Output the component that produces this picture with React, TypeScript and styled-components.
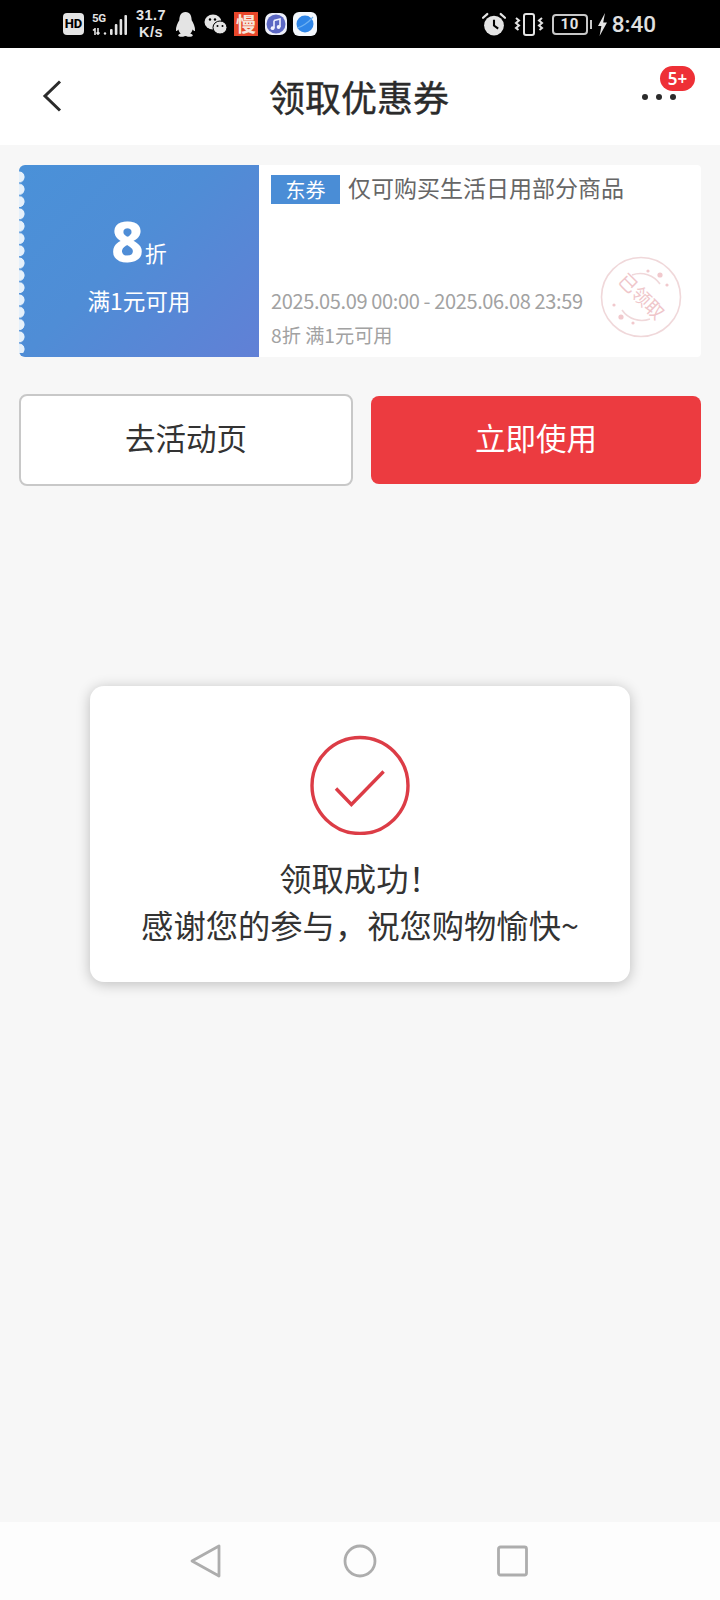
import React from 'react'
import styled, { createGlobalStyle } from 'styled-components'

const FONT = '"Noto Sans CJK SC", "Noto Sans", sans-serif'

const GlobalStyle = createGlobalStyle`
	html, body {
		margin: 0;
		padding: 0;
		background: #f7f7f7;
		font-family: ${FONT};
	}
	* {
		box-sizing: border-box;
	}
`

const Page = styled.div`
	position: relative;
	width: 720px;
	height: 1600px;
	display: flex;
	flex-direction: column;
	overflow: hidden;
	background: #f7f7f7;
`

/* status bar */
const StatusBar = styled.div`
	height: 48px;
	flex-shrink: 0;
	background: #000;
	color: #e4e4e4;
	display: flex;
	align-items: center;
	justify-content: space-between;
	padding: 0 64px 0 63px;
`

const StatusGroup = styled.div`
	display: flex;
	align-items: center;
`

const HdBadge = styled.span`
	width: 21px;
	height: 22px;
	border-radius: 4px;
	background: #e4e4e4;
	color: #000;
	font: 800 13px/22px 'Roboto', sans-serif;
	text-align: center;
`

const NetworkBlock = styled.div`
	display: flex;
	align-items: flex-end;
	margin-left: 8px;
	height: 22px;
`

const NetworkLabels = styled.div`
	display: flex;
	flex-direction: column;
	gap: 4px;
	width: 18px;
	font: 700 11.5px/11px 'Roboto', sans-serif;
	letter-spacing: -0.3px;
`

const Speed = styled.div`
	width: 34px;
	margin: 0 7px 0 7px;
	text-align: center;
	font: 700 14.5px/17px 'Liberation Sans', sans-serif;
	letter-spacing: 0.4px;
	white-space: nowrap;
`

const AppIcon = styled.span<{ $gap?: number }>`
	display: flex;
	margin-left: ${(p) => p.$gap ?? 7}px;
`

const SlowBadge = styled.span`
	width: 24px;
	height: 24px;
	margin-left: 7px;
	background: #e8472a;
	color: #f6e6dc;
	font: 700 20px/24px ${FONT};
	text-align: center;
`

const BatteryBody = styled.span`
	width: 36px;
	height: 21px;
	margin-left: 8px;
	border: 2px solid #c8c8c8;
	border-radius: 4px;
	font: 700 15px/17px 'Roboto', sans-serif;
	text-align: center;
	letter-spacing: 0.5px;
`

const BatteryTip = styled.span`
	width: 2px;
	height: 9px;
	margin-left: 2px;
	background: #c8c8c8;
`

const Clock = styled.span`
	margin-left: 5px;
	color: #e0e0e0;
	font: 500 22.5px/26px 'Roboto', sans-serif;
`

/* title bar */
const Header = styled.header`
	height: 97px;
	flex-shrink: 0;
	background: #fff;
	display: grid;
	grid-template-columns: 1fr auto 1fr;
	align-items: center;
	padding: 0 44px 0 42px;
`

const BackIcon = styled.svg`
	margin-top: -2px;
`

const Title = styled.h1`
	margin: -2px 0 0;
	font: 400 36px/48px ${FONT};
	-webkit-text-stroke: 0.4px #2b2b2b;
	color: #2b2b2b;
`

const MoreButton = styled.div`
	position: relative;
	justify-self: end;
	display: flex;
	gap: 8px;
`

const Dot = styled.span`
	width: 6px;
	height: 6px;
	border-radius: 50%;
	background: #2b2b2b;
`

const CountBadge = styled.span`
	position: absolute;
	left: 18px;
	top: -28px;
	width: 35px;
	height: 25px;
	border-radius: 13px;
	background: #ee3036;
	color: #fff;
	font: 600 17px/25px 'Noto Sans', sans-serif;
	text-align: center;
`

/* coupon */
const Content = styled.main`
	flex: 1;
	padding: 20px 19px 0;
`

const Ticket = styled.section`
	height: 192px;
	display: flex;
`

const TicketValue = styled.div`
	position: relative;
	width: 240px;
	flex-shrink: 0;
	border-radius: 6px 0 0 6px;
	background: linear-gradient(135deg, #4a91d8 0%, #4f8dd6 45%, #6180d6 100%);
	color: #fff;
	display: flex;
	flex-direction: column;
	align-items: center;
	padding-top: 41px;

	&::before {
		content: '';
		position: absolute;
		left: 0;
		top: 6px;
		bottom: 4px;
		width: 6px;
		background-image: radial-gradient(circle at 0 6px, #e6f1fb 5.2px, transparent 5.9px);
		background-size: 6px 12.3px;
	}
`

const Rate = styled.div`
	display: flex;
	align-items: baseline;
	height: 68px;
`

const RateNumber = styled.span`
	font: 800 56px/68px 'Noto Sans', sans-serif;
`

const RateUnit = styled.span`
	margin-left: 1px;
	font: 400 22px/28px ${FONT};
`

const RateRule = styled.div`
	margin-top: 11px;
	font: 400 22.6px/32px ${FONT};
`

const TicketBody = styled.div`
	position: relative;
	flex: 1;
	border-radius: 0 4px 4px 0;
	background: #fff;
	padding: 8px 12px 0;
	display: flex;
	flex-direction: column;
`

const TitleRow = styled.div`
	display: flex;
	align-items: flex-start;
`

const TicketTag = styled.span`
	width: 69px;
	height: 29px;
	margin-top: 2px;
	background: #4a8dd6;
	color: #fff;
	font: 400 20px/29px ${FONT};
	text-align: center;
`

const TicketName = styled.span`
	margin-left: 8px;
	margin-top: -2px;
	font: 400 23px/32px ${FONT};
	color: #666;
`

const TicketDate = styled.div<{ $size: number; $tight?: number }>`
	font: 400 ${(p) => p.$size}px/34px ${FONT};
	letter-spacing: ${(p) => p.$tight ?? 0}px;
	color: #a2a2a2;
	white-space: nowrap;
`

const DatePush = styled.div`
	margin-top: auto;
	padding-bottom: 5px;
`

const Stamp = styled.svg`
	position: absolute;
	right: 19px;
	top: 91px;
`

const Actions = styled.div`
	display: flex;
	align-items: center;
	gap: 18px;
	margin-top: 37px;
`

const GhostButton = styled.div`
	width: 334px;
	height: 92px;
	border: 2px solid #c8c8c8;
	border-radius: 8px;
	background: #fff;
	color: #333;
	font: 400 30.5px/83px ${FONT};
	text-align: center;
`

const PrimaryButton = styled.div`
	width: 330px;
	height: 88px;
	border-radius: 8px;
	background: #ec3b40;
	color: #fff;
	font: 400 30.5px/83px ${FONT};
	text-align: center;
`

/* success dialog, floats over the page */
const Dialog = styled.div`
	position: absolute;
	left: 90px;
	top: 686px;
	width: 540px;
	height: 296px;
	border-radius: 14px;
	background: #fff;
	box-shadow: 0 2px 14px rgba(0, 0, 0, 0.24);
	display: flex;
	flex-direction: column;
	align-items: center;
	padding-top: 49px;
`

const DialogText = styled.div`
	margin-top: 19px;
	font: 400 32.3px/47px ${FONT};
	color: #333;
	text-align: center;
	white-space: nowrap;
`

/* system navigation */
const NavBar = styled.nav`
	height: 78px;
	flex-shrink: 0;
	background: #fdfdfd;
	display: flex;
	align-items: center;
	justify-content: center;
	gap: 120px;
`

const TransferArrows = () => (
	<svg width="18" height="7" viewBox="0 0 18 7" fill="none" stroke="#e4e4e4" strokeWidth="1.6">
		<path d="M1 2.5L3 .8V7" />
		<path d="M6 0v6M4.5 4.5L6 6.2 7.5 4.5" />
		<circle cx="13" cy="5.5" r="1.2" fill="#e4e4e4" stroke="none" />
	</svg>
)

const SignalBars = () => (
	<svg width="17" height="20" viewBox="0 0 17 20" fill="#e4e4e4">
		<rect x="0" y="14" width="2.6" height="6" rx="1" />
		<rect x="4.8" y="9" width="2.6" height="11" rx="1" />
		<rect x="9.6" y="4" width="2.6" height="16" rx="1" />
		<rect x="14.4" y="0" width="2.6" height="20" rx="1" />
	</svg>
)

const Penguin = () => (
	<svg width="21" height="25" viewBox="0 0 21 25" fill="#e4e4e4">
		<path d="M10.5 0C5.8 0 4.4 4 4.3 8.2 2.6 11 .6 15 1 18.6c.2 1 1.4.4 2.4-1 .4 1.7 1.2 3 2.3 4-1.3.5-2.5 1.1-2.5 2 0 1.2 3.5 1.4 5 1.1.9-.3 1.5-.6 2.3-.6s1.4.3 2.3.6c1.5.3 5 .1 5-1.1 0-.9-1.2-1.5-2.5-2 1.1-1 1.9-2.3 2.3-4 1 1.4 2.2 2 2.4 1 .4-3.6-1.6-7.6-3.3-10.4C16.6 4 15.2 0 10.5 0z" />
	</svg>
)

const Wechat = () => (
	<svg width="23" height="21" viewBox="0 0 23 21">
		<ellipse cx="9" cy="8" rx="8.5" ry="7.5" fill="#e4e4e4" />
		<ellipse cx="16" cy="13.5" rx="7" ry="6.5" fill="#e4e4e4" stroke="#000" strokeWidth="1" />
		<circle cx="6" cy="5.5" r="1.2" fill="#000" />
		<circle cx="11" cy="5.5" r="1.2" fill="#000" />
		<circle cx="13.5" cy="12" r="1" fill="#000" />
		<circle cx="18.5" cy="12" r="1" fill="#000" />
	</svg>
)

const MusicApp = () => (
	<svg width="22" height="22" viewBox="0 0 22 22">
		<rect width="22" height="22" rx="7" fill="#eef0fa" />
		<circle cx="11" cy="11" r="9.5" fill="#5c68c4" />
		<path d="M9 7.5l6-1.5v8" fill="none" stroke="#f2f3ff" strokeWidth="1.6" />
		<path d="M9 7.5V15" fill="none" stroke="#f2f3ff" strokeWidth="1.6" />
		<circle cx="7.6" cy="15.2" r="1.9" fill="#f2f3ff" />
		<circle cx="13.6" cy="14" r="1.9" fill="#f2f3ff" />
	</svg>
)

const BrowserApp = () => (
	<svg width="24" height="24" viewBox="0 0 24 24">
		<rect width="24" height="24" rx="6" fill="#f4f8fd" />
		<circle cx="12" cy="12" r="8.5" fill="#2f86e8" />
		<path d="M4 16c4-.5 11-5 16-11" fill="none" stroke="#6fb2f2" strokeWidth="1.2" />
	</svg>
)

const Alarm = () => (
	<svg width="24" height="24" viewBox="0 0 23 23">
		<circle cx="11.5" cy="13" r="9.5" fill="#e4e4e4" />
		<path d="M11.5 7.5V13l4 3" fill="none" stroke="#000" strokeWidth="2" />
		<path d="M1 5.5l4-3.5M22 5.5l-4-3.5" stroke="#e4e4e4" strokeWidth="2.2" strokeLinecap="round" />
	</svg>
)

const Vibrate = () => (
	<svg width="30" height="23" viewBox="0 0 30 23" fill="none" stroke="#e4e4e4" strokeWidth="2">
		<rect x="10" y="1" width="10" height="21" rx="2" />
		<path d="M2 5l3 2.5-3 2.5 3 2.5-3 2.5 2.5 2" />
		<path d="M28 5l-3 2.5 3 2.5-3 2.5 3 2.5-2.5 2" />
	</svg>
)

const Bolt = () => (
	<svg width="9" height="23" viewBox="0 0 9 23" fill="#e4e4e4">
		<path d="M7 0L0 13h3.4L1.6 23 9 9.5H5.2z" />
	</svg>
)

const BackArrow = () => (
	<BackIcon width="20" height="32" viewBox="0 0 20 32" fill="none" stroke="#2b2b2b" strokeWidth="3">
		<path d="M18 1.5L3 16 18 30.5" />
	</BackIcon>
)

const ClaimedStamp = () => (
	<Stamp width="82" height="82" viewBox="0 0 82 82" fill="none" stroke="#f0d8da" strokeWidth="1.6">
		<circle cx="41" cy="41" r="39.5" />
		<path d="M32 19a24 24 0 0 1 28 9M50 63a24 24 0 0 1-28-9" />
		<g fill="#f1c9cd" stroke="none">
			<circle cx="48" cy="15" r="1.6" />
			<circle cx="60" cy="19" r="2.6" />
			<circle cx="67" cy="29" r="1.6" />
			<circle cx="14" cy="49" r="1.6" />
			<circle cx="21" cy="61" r="2.6" />
			<circle cx="33" cy="67" r="1.6" />
		</g>
		<text
			x="41"
			y="47"
			textAnchor="middle"
			transform="rotate(45 41 41)"
			fill="#efc6ca"
			stroke="none"
			fontSize="18.5"
			fontFamily={FONT}
		>
			已领取
		</text>
	</Stamp>
)

const App = () => (
	<Page>
		<GlobalStyle />
		<StatusBar>
			<StatusGroup>
				<HdBadge>HD</HdBadge>
				<NetworkBlock>
					<NetworkLabels>
						<span>5G</span>
						<TransferArrows />
					</NetworkLabels>
					<SignalBars />
				</NetworkBlock>
				<Speed>
					31.7
					<br />
					K/s
				</Speed>
				<Penguin />
				<AppIcon $gap={8}>
					<Wechat />
				</AppIcon>
				<SlowBadge>慢</SlowBadge>
				<AppIcon>
					<MusicApp />
				</AppIcon>
				<AppIcon $gap={6}>
					<BrowserApp />
				</AppIcon>
			</StatusGroup>
			<StatusGroup>
				<Alarm />
				<AppIcon $gap={8}>
					<Vibrate />
				</AppIcon>
				<BatteryBody>10</BatteryBody>
				<BatteryTip />
				<AppIcon $gap={6}>
					<Bolt />
				</AppIcon>
				<Clock>8:40</Clock>
			</StatusGroup>
		</StatusBar>

		<Header>
			<BackArrow />
			<Title>领取优惠券</Title>
			<MoreButton>
				<Dot />
				<Dot />
				<Dot />
				<CountBadge>5+</CountBadge>
			</MoreButton>
		</Header>

		<Content>
			<Ticket>
				<TicketValue>
					<Rate>
						<RateNumber>8</RateNumber>
						<RateUnit>折</RateUnit>
					</Rate>
					<RateRule>满1元可用</RateRule>
				</TicketValue>
				<TicketBody>
					<TitleRow>
						<TicketTag>东券</TicketTag>
						<TicketName>仅可购买生活日用部分商品</TicketName>
					</TitleRow>
					<DatePush>
						<TicketDate $size={20} $tight={-0.37}>
							2025.05.09 00:00 - 2025.06.08 23:59
						</TicketDate>
						<TicketDate $size={19.2}>8折 满1元可用</TicketDate>
					</DatePush>
					<ClaimedStamp />
				</TicketBody>
			</Ticket>
			<Actions>
				<GhostButton>去活动页</GhostButton>
				<PrimaryButton>立即使用</PrimaryButton>
			</Actions>
		</Content>

		<Dialog>
			<svg width="100" height="100" viewBox="0 0 100 100" fill="none" stroke="#dc3c46" strokeWidth="3.4">
				<circle cx="50" cy="50.5" r="48" />
				<path d="M26 53.5l15.4 16L73.6 36.5" />
			</svg>
			<DialogText>
				领取成功！
				<br />
				感谢您的参与，祝您购物愉快~
			</DialogText>
		</Dialog>

		<NavBar>
			<svg width="34" height="34" viewBox="0 0 34 34" fill="none" stroke="#adadad" strokeWidth="2.8" strokeLinejoin="round">
				<path d="M3 17L30 2v30z" />
			</svg>
			<svg width="34" height="34" viewBox="0 0 34 34" fill="none" stroke="#adadad" strokeWidth="2.8">
				<circle cx="17" cy="17" r="15" />
			</svg>
			<svg width="34" height="34" viewBox="0 0 34 34" fill="none" stroke="#adadad" strokeWidth="2.8" strokeLinejoin="round">
				<rect x="1.5" y="3" width="28" height="28" rx="2" />
			</svg>
		</NavBar>
	</Page>
)

export default App
